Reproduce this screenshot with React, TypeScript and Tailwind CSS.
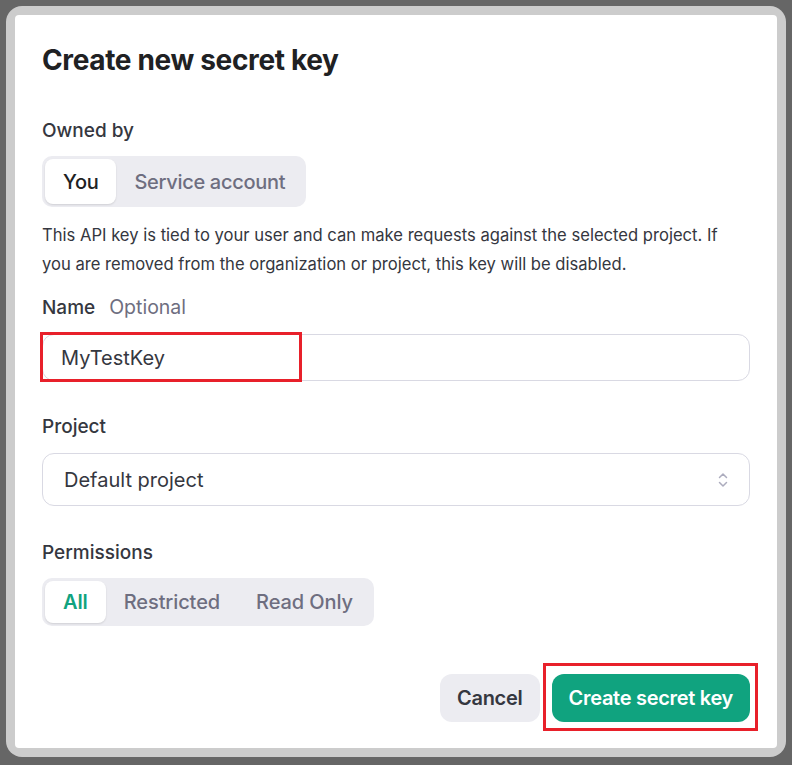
import React from "react";

export default function App() {
  return (
    <div
      className="w-[792px] h-[765px] bg-[#666666] pt-[6px] pl-[6px] pr-[6px] pb-[8px]"
      style={{ fontFamily: "Inter, 'Noto Sans', sans-serif" }}
    >
      <div className="w-full h-full bg-[#cccccc] rounded-[16px] p-[9px]">
        <div className="w-full h-full bg-white rounded-[4px] pl-[27px] pr-[27px] pt-[26px] flex flex-col text-[#353740]">
          <h1 className="text-[28px] leading-[38px] font-bold text-[#202123] tracking-[-0.35px]">
            Create new secret key
          </h1>

          <div className="mt-[39px] text-[19px] leading-[26px] font-medium">Owned by</div>

          <div className="mt-[12px] flex">
            <div className="flex items-center bg-[#ececf1] rounded-[10px] p-[3px] h-[51px]">
              <div className="h-full px-[18px] flex items-center bg-white rounded-[8px] shadow-[0_1px_2px_rgba(0,0,0,0.12)] text-[20px] font-medium text-[#202123] tracking-[-0.3px]">
                You
              </div>
              <div className="h-full px-[18px] flex items-center text-[20px] font-medium text-[#6e6e80] tracking-[-0.3px]">
                Service account
              </div>
            </div>
          </div>

          <p className="mt-[14px] text-[16.6px] leading-[29px] text-[#353740]">
            This API key is tied to your user and can make requests against the selected project. If you are removed from the organization or project, this key will be disabled.
          </p>

          <div className="mt-[15px] flex items-baseline gap-[14px] text-[19px] leading-[26px]">
            <span className="font-medium">Name</span>
            <span className="text-[#6e6e80] text-[19.5px]">Optional</span>
          </div>

          <div className="relative mt-[13px]">
            <div className="h-[47px] border border-[#d9d9e3] rounded-[12px] flex items-center pl-[18px] text-[20px] text-[#353740]">
              MyTestKey
            </div>
            <div className="absolute left-[-2px] top-[-2px] w-[262px] h-[50px] border-[3px] border-[#e8202a]" />
          </div>

          <div className="mt-[33px] text-[19px] leading-[26px] font-medium">Project</div>

          <div className="mt-[13px] h-[53px] border border-[#d9d9e3] rounded-[12px] flex items-center justify-between pl-[21px] pr-[20px] text-[20px] text-[#353740]">
            <span>Default project</span>
            <svg width="12" height="18" viewBox="0 0 12 18" fill="none" stroke="#acacbe" strokeWidth="1.5" strokeLinecap="round" strokeLinejoin="round">
              <path d="M2.5 6.5 L6 3 L9.5 6.5" />
              <path d="M2.5 11.5 L6 15 L9.5 11.5" />
            </svg>
          </div>

          <div className="mt-[34px] text-[19px] leading-[26px] font-medium">Permissions</div>

          <div className="mt-[12px] flex">
            <div className="flex items-center bg-[#ececf1] rounded-[10px] p-[3px] h-[48px]">
              <div className="h-full px-[18px] flex items-center bg-white rounded-[8px] shadow-[0_1px_2px_rgba(0,0,0,0.12)] text-[20px] font-semibold text-[#10a37f] tracking-[-0.1px]">
                All
              </div>
              <div className="h-full px-[18px] flex items-center text-[20px] font-medium text-[#6e6e80] tracking-[-0.1px]">
                Restricted
              </div>
              <div className="h-full px-[18px] flex items-center text-[20px] font-medium text-[#6e6e80] tracking-[-0.1px]">
                Read Only
              </div>
            </div>
          </div>

          <div className="mt-[48px] flex justify-end gap-[12px]">
            <button className="h-[48px] px-[17px] rounded-[12px] bg-[#ececf1] text-[20px] font-semibold text-[#353740] tracking-[-0.25px]">
              Cancel
            </button>
            <div className="relative">
              <button className="h-[48px] px-[17px] rounded-[12px] bg-[#10a37f] text-[20px] font-semibold text-white tracking-[-0.3px]">
                Create secret key
              </button>
              <div className="absolute left-[-9px] top-[-11px] right-[-8px] bottom-[-9px] border-[3px] border-[#e8202a]" />
            </div>
          </div>
        </div>
      </div>
    </div>
  );
}
